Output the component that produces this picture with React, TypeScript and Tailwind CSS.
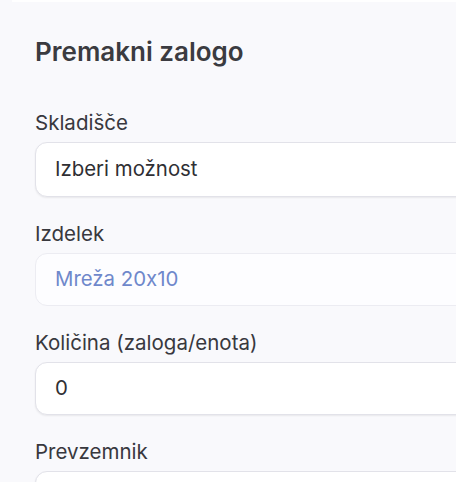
const FONT = "font-['Inter','Noto_Sans',sans-serif] [font-feature-settings:'calt'_0]";

type FieldProps = {
  label: string;
  children: React.ReactNode;
  className?: string;
};

function Field({ label, children, className }: FieldProps) {
  return (
    <div className={`flex flex-col gap-[5px] ${className ?? ""}`}>
      <label className="text-[20.5px] leading-[28px] text-[#38383e]">{label}</label>
      {children}
    </div>
  );
}

export default function App() {
  return (
    <div className={`h-[482px] w-[456px] overflow-hidden bg-[#f9f9fc] ${FONT}`}>
      <div className="ml-[12px] h-[2px] bg-white" />
      <div className="pl-[35px] pt-[32px]">
        <h1 className="text-[26px] leading-[36px] font-semibold text-[#3b3b40]">
          Premakni zalogo
        </h1>

        <Field label="Skladišče" className="mt-[39px]">
          <div className="flex h-[55px] w-[520px] items-center rounded-[12px] border border-[#e2e2e9] bg-white pl-[19px] text-[20.4px] text-[#2f2f34] shadow-[0_1px_2px_rgba(0,0,0,0.07)]">
            Izberi možnost
          </div>
        </Field>

        <Field label="Izdelek" className="mt-[23px]">
          <div className="flex h-[53px] w-[520px] items-center rounded-[12px] border border-[#ececf2] bg-[#fdfdff] pl-[19px] text-[20.4px] text-[#6f88cb]">
            Mreža 20x10
          </div>
        </Field>

        <Field label="Količina (zaloga/enota)" className="mt-[23px]">
          <div className="flex h-[53px] w-[520px] items-center rounded-[12px] border border-[#e2e2e9] bg-white pl-[19px] text-[20.4px] text-[#2f2f34] shadow-[0_1px_2px_rgba(0,0,0,0.07)]">
            0
          </div>
        </Field>

        <Field label="Prevzemnik" className="mt-[23px]">
          <div className="flex h-[53px] w-[520px] items-center rounded-[12px] border border-[#e2e2e9] bg-white pl-[19px] text-[20.4px] text-[#2f2f34] shadow-[0_1px_2px_rgba(0,0,0,0.07)]" />
        </Field>
      </div>
    </div>
  );
}
